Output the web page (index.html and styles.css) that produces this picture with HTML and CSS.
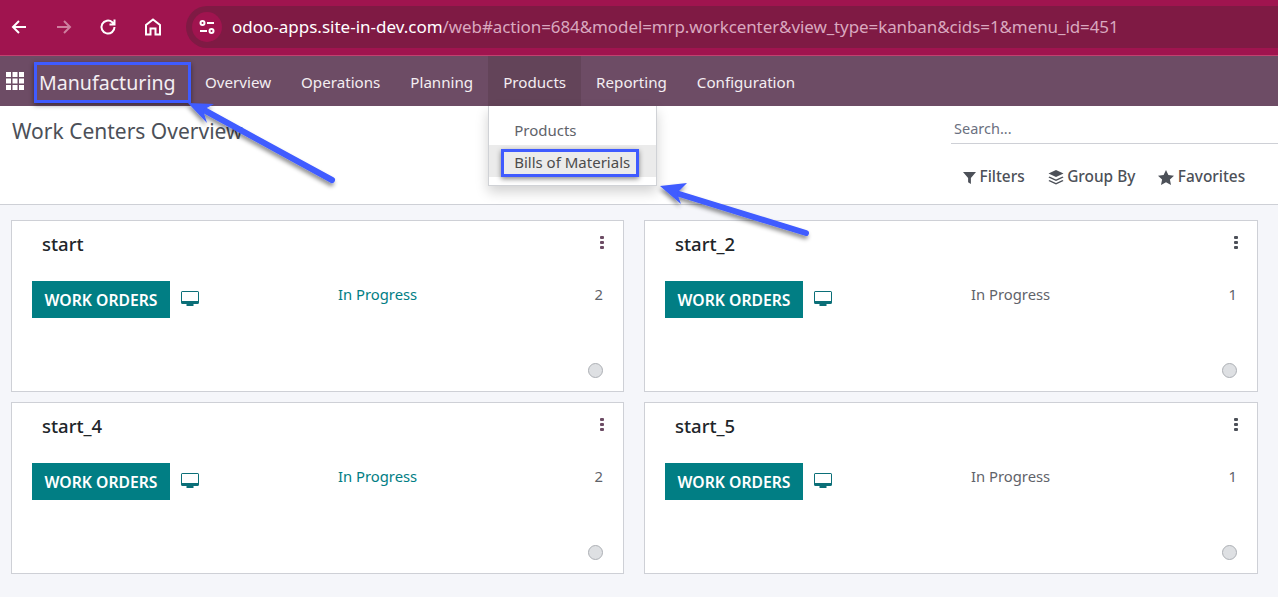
FILE: index.html
```html
<!DOCTYPE html>
<html lang="en">
<head>
    <meta charset="UTF-8">
    <meta name="viewport" content="width=device-width, initial-scale=1.0">
    <title>Work Centers Overview</title>
    <link rel="stylesheet" href="styles.css">
</head>
<body>
    <header class="browser-bar">
        <svg class="nav-icon" viewBox="0 0 20 20"><path d="M17 10H4M10 4l-6 6 6 6"/></svg>
        <svg class="nav-icon nav-icon-off" viewBox="0 0 20 20"><path d="M3 10h13M10 4l6 6-6 6"/></svg>
        <svg class="nav-icon" viewBox="0 0 20 20"><path d="M16.500 10a6.500 6.500 0 1 1-2.200-4.800L16.500 7.500M16.500 2.500v5h-5"/></svg>
        <svg class="nav-icon" viewBox="0 0 20 20"><path d="M3 17.500V8l7-5.500L17 8v9.500h-4.500v-6h-5v6z"/></svg>
        <div class="address">
            <span class="site-btn">
                <svg class="site-icon" viewBox="0 0 18 18"><circle cx="4.500" cy="5" r="2"/><path d="M9 5h7M2 13h7"/><circle cx="13.500" cy="13" r="2"/></svg>
            </span>
            <span class="url"><span class="url-host">odoo-apps.site-in-dev.com</span>/web#action=684&amp;model=mrp.workcenter&amp;view_type=kanban&amp;cids=1&amp;menu_id=451</span>
        </div>
    </header>

    <nav class="navbar">
        <svg class="apps-icon" viewBox="0 0 18 18">
            <rect x="0" y="0" width="5" height="5"/><rect x="6.500" y="0" width="5" height="5"/><rect x="13" y="0" width="5" height="5"/>
            <rect x="0" y="6.500" width="5" height="5"/><rect x="6.500" y="6.500" width="5" height="5"/><rect x="13" y="6.500" width="5" height="5"/>
            <rect x="0" y="13" width="5" height="5"/><rect x="6.500" y="13" width="5" height="5"/><rect x="13" y="13" width="5" height="5"/>
        </svg>
        <span class="brand">Manufacturing</span>
        <a class="nav-item">Overview</a>
        <a class="nav-item">Operations</a>
        <a class="nav-item">Planning</a>
        <div class="nav-group">
            <a class="nav-item nav-item-open">Products</a>
            <div class="dropdown">
                <div class="dropdown-item">Products</div>
                <div class="dropdown-item dropdown-item-active">Bills of Materials</div>
            </div>
        </div>
        <a class="nav-item">Reporting</a>
        <a class="nav-item">Configuration</a>
    </nav>

    <section class="control-panel">
        <h1 class="page-title">Work Centers Overview</h1>
        <div class="panel-right">
            <div class="search">Search...</div>
            <div class="filters">
                <span class="filter">
                    <svg class="filter-icon" viewBox="0 0 14 14"><path d="M0 1h14L8.500 7.500V14L5.500 12V7.500z"/></svg>
                    Filters
                </span>
                <span class="filter">
                    <svg class="filter-icon filter-icon-wide" viewBox="0 0 16 15"><path d="M8 0l7.500 3.500L8 7 .5 3.500z"/><path d="M1.500 6.500L8 9.500l6.500-3 1 1L8 11 .5 7.500zM1.500 10L8 13l6.500-3 1 1L8 14.500.5 11z"/></svg>
                    Group By
                </span>
                <span class="filter">
                    <svg class="filter-icon filter-icon-wide" viewBox="0 0 16 15"><path d="M8 0l2.400 5 5.600.7-4.100 3.800 1.100 5.500L8 12.300 3 15l1.100-5.500L0 5.700 5.600 5z"/></svg>
                    Favorites
                </span>
            </div>
        </div>
    </section>

    <main class="kanban">
        <article class="card">
            <div class="card-top">
                <span class="card-name">start</span>
                <span class="card-menu card-menu-plum"><i></i><i></i><i></i></span>
            </div>
            <div class="card-row">
                <span class="work-btn">WORK ORDERS</span>
                <svg class="screen-icon" viewBox="0 0 18 15"><path fill-rule="evenodd" d="M1.500 0h15A1.500 1.500 0 0 1 18 1.500v10a1.500 1.500 0 0 1-1.500 1.500H12.500v2h-7v-2h-4A1.500 1.500 0 0 1 0 11.500v-10A1.500 1.500 0 0 1 1.500 0zM1 1v9h16V1z"/></svg>
                <span class="status status-teal">In Progress</span>
                <span class="count">2</span>
            </div>
            <span class="dot"></span>
        </article>
        <article class="card">
            <div class="card-top">
                <span class="card-name">start_2</span>
                <span class="card-menu"><i></i><i></i><i></i></span>
            </div>
            <div class="card-row">
                <span class="work-btn">WORK ORDERS</span>
                <svg class="screen-icon" viewBox="0 0 18 15"><path fill-rule="evenodd" d="M1.500 0h15A1.500 1.500 0 0 1 18 1.500v10a1.500 1.500 0 0 1-1.500 1.500H12.500v2h-7v-2h-4A1.500 1.500 0 0 1 0 11.500v-10A1.500 1.500 0 0 1 1.500 0zM1 1v9h16V1z"/></svg>
                <span class="status">In Progress</span>
                <span class="count">1</span>
            </div>
            <span class="dot"></span>
        </article>
        <article class="card">
            <div class="card-top">
                <span class="card-name">start_4</span>
                <span class="card-menu card-menu-plum"><i></i><i></i><i></i></span>
            </div>
            <div class="card-row">
                <span class="work-btn">WORK ORDERS</span>
                <svg class="screen-icon" viewBox="0 0 18 15"><path fill-rule="evenodd" d="M1.500 0h15A1.500 1.500 0 0 1 18 1.500v10a1.500 1.500 0 0 1-1.500 1.500H12.500v2h-7v-2h-4A1.500 1.500 0 0 1 0 11.500v-10A1.500 1.500 0 0 1 1.500 0zM1 1v9h16V1z"/></svg>
                <span class="status status-teal">In Progress</span>
                <span class="count">2</span>
            </div>
            <span class="dot"></span>
        </article>
        <article class="card">
            <div class="card-top">
                <span class="card-name">start_5</span>
                <span class="card-menu"><i></i><i></i><i></i></span>
            </div>
            <div class="card-row">
                <span class="work-btn">WORK ORDERS</span>
                <svg class="screen-icon" viewBox="0 0 18 15"><path fill-rule="evenodd" d="M1.500 0h15A1.500 1.500 0 0 1 18 1.500v10a1.500 1.500 0 0 1-1.500 1.500H12.500v2h-7v-2h-4A1.500 1.500 0 0 1 0 11.500v-10A1.500 1.500 0 0 1 1.500 0zM1 1v9h16V1z"/></svg>
                <span class="status">In Progress</span>
                <span class="count">1</span>
            </div>
            <span class="dot"></span>
        </article>
    </main>

    <!-- annotations drawn over the screenshot -->
    <div class="callout callout-brand"></div>
    <div class="callout callout-bom"></div>
    <svg class="arrows" viewBox="0 0 1278 597">
        <defs>
            <filter id="arrowShadow" x="-20%" y="-20%" width="140%" height="140%">
                <feDropShadow dx="-1" dy="3" stdDeviation="2" flood-color="#000" flood-opacity="0.45"/>
            </filter>
        </defs>
        <g filter="url(#arrowShadow)">
            <path class="arrow-line" d="M332 180L204 110"/>
            <path class="arrow-head" d="M188 103L214 104L203 110L207 123z"/>
            <path class="arrow-line" d="M806 233L676 193"/>
            <path class="arrow-head" d="M660 186L687 183L677 193L681 204z"/>
        </g>
    </svg>
</body>
</html>
```

FILE: styles.css
```css
* {
    box-sizing: border-box;
}
body {
    margin: 0;
    height: 597px;
    overflow: hidden;
    font-family: "Noto Sans", "Open Sans", sans-serif;
    background-color: #f5f6fa;
    position: relative;
}

/* browser chrome */
.browser-bar {
    height: 56px;
    background-color: #a0144f;
    border-bottom: 1px solid #c2406f;
    display: flex;
    align-items: center;
    padding: 0 0 1px 9px;
}
.nav-icon {
    width: 20px;
    height: 20px;
    margin-right: 24.500px;
    fill: none;
    stroke: #fff;
    stroke-width: 2;
}
.nav-icon-off {
    stroke: #cf7f9f;
}
.address {
    flex: 1;
    margin-left: -1px;
    height: 42px;
    background-color: #7f1a44;
    border-radius: 21px 0 0 21px;
    display: flex;
    align-items: center;
    padding-left: 6px;
}
.site-btn {
    width: 30px;
    height: 30px;
    border-radius: 50%;
    background-color: #a0144f;
    display: flex;
    align-items: center;
    justify-content: center;
}
.site-icon {
    width: 18px;
    height: 18px;
    fill: none;
    stroke: #fff;
    stroke-width: 2;
}
.url {
    margin-left: 10px;
    padding-bottom: 2px;
    font-size: 17px;
    letter-spacing: -0.1px;
    color: #d9a8bf;
    white-space: nowrap;
}
.url-host {
    color: #fff;
    letter-spacing: 0;
}

/* odoo navbar */
.navbar {
    height: 50px;
    background-color: #6d4c65;
    display: flex;
    align-items: stretch;
    color: #f4eef2;
    font-size: 15.150px;
}
.apps-icon {
    width: 18px;
    height: 18px;
    margin: 16px 0 0 6px;
    fill: #fff;
}
.brand {
    margin-left: 15px;
    width: 151px;
    font-size: 19.600px;
    line-height: 53px;
}
.nav-item {
    display: block;
    padding: 0 15px;
    line-height: 52px;
}
.nav-group {
    position: relative;
}
.nav-item-open {
    height: 100%;
    background-color: #634459;
}
.dropdown {
    position: absolute;
    top: 50px;
    left: 0;
    width: 169px;
    height: 80px;
    padding-top: 7px;
    background-color: #fff;
    border: 1px solid #d0d2d6;
    border-top: none;
    box-shadow: 0 6px 12px rgba(0, 0, 0, 0.18);
    font-size: 15px;
    z-index: 2;
}
.dropdown-item {
    height: 32px;
    padding-left: 25px;
    line-height: 34px;
    color: #5f636a;
}
.dropdown-item-active {
    background-color: #ebebeb;
    color: #4c4c4c;
}

/* control panel */
.control-panel {
    height: 99px;
    background-color: #fff;
    border-bottom: 1px solid #ced0d6;
    display: flex;
    justify-content: space-between;
}
.page-title {
    margin: 8px 0 0 12px;
    font-size: 21px;
    font-weight: 400;
    line-height: 34px;
    color: #4c5058;
}
.panel-right {
    width: 327px;
}
.search {
    height: 29px;
    margin-top: 9px;
    padding-left: 3px;
    border-bottom: 1px solid #ced0d6;
    font-size: 14.500px;
    line-height: 27px;
    color: #6b7080;
}
.filters {
    display: flex;
    margin: 23px 0 0 12px;
    gap: 23px;
    font-size: 15.400px;
    font-weight: 500;
    line-height: 20px;
    color: #4c5058;
}
.filter {
    display: flex;
    align-items: center;
    gap: 3.500px;
}
.filter-icon {
    width: 13px;
    height: 13px;
    fill: #4c5058;
}
.filter-icon-wide {
    width: 16px;
    height: 15px;
}

/* kanban cards */
.kanban {
    display: grid;
    grid-template-columns: 613px 614px;
    grid-auto-rows: 172px;
    gap: 10px 20px;
    padding: 15px 0 0 11px;
}
.card {
    position: relative;
    background-color: #fff;
    border: 1px solid #ced0d6;
    padding: 0 20px;
}
.card-top {
    display: flex;
    justify-content: space-between;
    height: 60px;
    padding: 9px 0 0 10px;
}
.card-name {
    font-size: 18.500px;
    font-weight: 500;
    line-height: 28px;
    color: #212529;
}
.card-menu {
    display: flex;
    flex-direction: column;
    gap: 2px;
    margin-top: 6px;
    margin-right: -1px;
}
.card-menu i {
    display: block;
    width: 4px;
    height: 3px;
    background-color: #4c5058;
    border-radius: 1px;
}
.card-menu-plum i {
    background-color: #6d4c65;
}
.card-row {
    display: flex;
    align-items: flex-start;
}
.work-btn {
    width: 138px;
    height: 37px;
    background-color: #017e84;
    color: #fff;
    font-size: 15.700px;
    font-weight: 600;
    line-height: 38px;
    text-align: center;
    white-space: nowrap;
    flex-shrink: 0;
}
.screen-icon {
    width: 18px;
    height: 15px;
    margin: 10px 1px 0 11px;
    fill: #0b6f78;
    flex-shrink: 0;
}
.status {
    margin: 2px 0 0 138px;
    font-size: 14.800px;
    line-height: 22px;
    color: #5f636a;
}
.status-teal {
    color: #017e84;
}
.count {
    margin: 2px 0 0 auto;
    font-size: 14.800px;
    line-height: 22px;
    color: #5f636a;
}
.dot {
    position: absolute;
    right: 20px;
    bottom: 13px;
    width: 15px;
    height: 15px;
    border-radius: 50%;
    background-color: #dee0e3;
    border: 1px solid #adb0b5;
}

/* annotations */
.callout {
    position: absolute;
    border: 3px solid #3f5bff;
    box-shadow: 0 2px 5px rgba(0, 0, 0, 0.45);
    z-index: 3;
}
.callout-brand {
    left: 34px;
    top: 62px;
    width: 157px;
    height: 41px;
}
.callout-bom {
    left: 501px;
    top: 149px;
    width: 138px;
    height: 28px;
}
.arrows {
    position: absolute;
    left: 0;
    top: 0;
    width: 1278px;
    height: 597px;
    z-index: 4;
    pointer-events: none;
}
.arrow-line {
    fill: none;
    stroke: #3f5bff;
    stroke-width: 6;
    stroke-linecap: round;
}
.arrow-head {
    fill: #3f5bff;
}
```
